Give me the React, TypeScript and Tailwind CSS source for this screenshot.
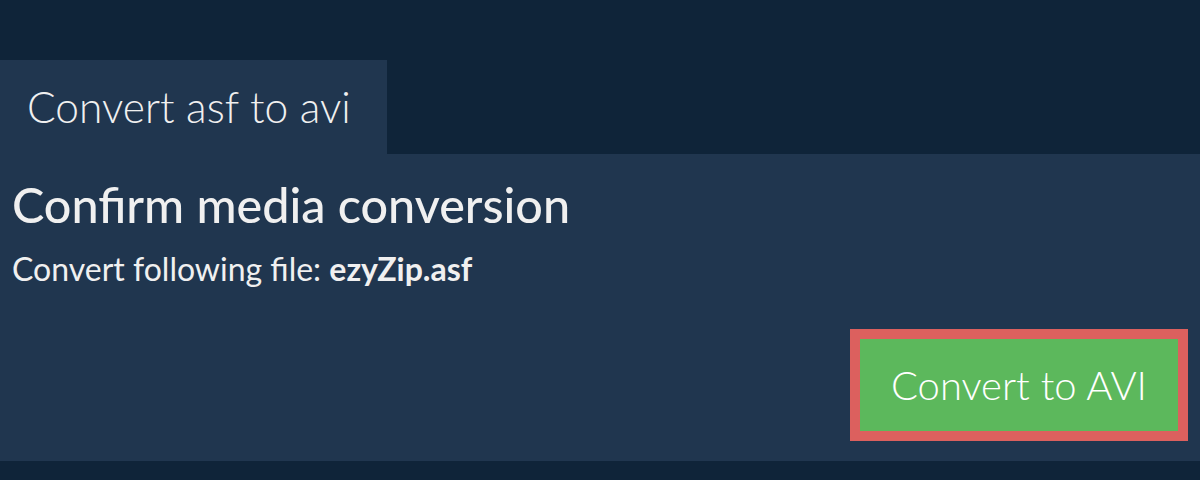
export default function App() {
  return (
    <div className="w-[1200px] h-[480px] bg-[#0f2439] pt-[60px] font-['Lato',sans-serif] text-[#f0f0f0]">
      <div className="w-[387px] h-[94px] bg-[#20364f] flex items-center pl-[27px]">
        <span className="text-[42.5px] font-light">Convert asf to avi</span>
      </div>
      <div className="h-[307px] bg-[#20364f] px-[12px] pt-[20px] flex flex-col">
        <h1 className="text-[48.5px] font-medium leading-tight">Confirm media conversion</h1>
        <p className="text-[32px] leading-tight mt-[14px]">
          Convert following file: <span className="font-bold">ezyZip.asf</span>
        </p>
        <div className="flex justify-end mt-auto mb-[20px]">
          <button className="border-[10px] border-[#dc605e] bg-[#5cb85c] w-[338px] h-[112px] text-white text-[40px] font-light">
            Convert to AVI
          </button>
        </div>
      </div>
    </div>
  );
}
